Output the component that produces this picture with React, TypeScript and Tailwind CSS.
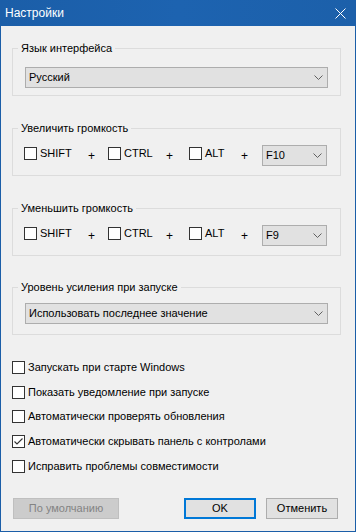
import React from "react";

function Chevron() {
  return (
    <svg width="9" height="5" viewBox="0 0 9 5" className="shrink-0">
      <polyline points="0.5,0.5 4.5,4.5 8.5,0.5" fill="none" stroke="#606060" strokeWidth="1" />
    </svg>
  );
}

function Combo({ value, className }: { value: string; className: string }) {
  return (
    <div
      className={
        "h-[21px] border border-[#adadad] bg-[#e1e1e1] flex items-center justify-between pl-[3px] pr-[4px] text-black " +
        className
      }
    >
      <span className="leading-[13px]">{value}</span>
      <Chevron />
    </div>
  );
}

function Box({ checked }: { checked?: boolean }) {
  return (
    <div className="w-[13px] h-[13px] border border-[#333333] bg-white shrink-0 flex items-center justify-center">
      {checked && (
        <svg width="11" height="11" viewBox="0 0 11 11">
          <polyline points="1.5,5.5 4,8 9.5,2.5" fill="none" stroke="#333333" strokeWidth="1.1" />
        </svg>
      )}
    </div>
  );
}

function Check({ label, checked, className }: { label: string; checked?: boolean; className?: string }) {
  return (
    <div className={"flex items-center gap-[3px] h-[13px] " + (className ?? "")}>
      <Box checked={checked} />
      <span className="leading-[13px] whitespace-nowrap">{label}</span>
    </div>
  );
}

function Group({
  title,
  children,
  pt,
  pb,
  className,
}: {
  title: string;
  children: React.ReactNode;
  pt: string;
  pb: string;
  className: string;
}) {
  return (
    <fieldset className={"border border-[#dcdcdc] m-0 p-0 " + className}>
      <legend className="ml-[5px] px-[3px] leading-[16px] text-black">{title}</legend>
      <div className={pt + " " + pb}>{children}</div>
    </fieldset>
  );
}

function Plus({ className }: { className: string }) {
  return <span className={"h-[14px] leading-[14px] text-[12px] mt-[4px] shrink-0 " + className}>+</span>;
}

function HotkeyRow({ fkey }: { fkey: string }) {
  return (
    <div className="flex items-start pl-[11px]">
      <Check label="SHIFT" className="w-[64px] mt-[2px] shrink-0" />
      <Plus className="w-[20px]" />
      <Check label="CTRL" className="w-[58px] mt-[2px] shrink-0" />
      <Plus className="w-[23px]" />
      <Check label="ALT" className="w-[52px] mt-[2px] shrink-0" />
      <Plus className="w-[21px]" />
      <Combo value={fkey} className="w-[65px]" />
    </div>
  );
}

export default function App() {
  return (
    <div
      className="w-[356px] h-[532px] bg-[#f0f0f0] flex flex-col border-x border-b border-[#1b5ea8] text-[11px] text-black"
      style={{ fontFamily: "'Liberation Sans', Arial, sans-serif" }}
    >
      <div className="h-[26px] shrink-0 bg-gradient-to-r from-[#1b5ea8] via-[#1d63b0] to-[#1c60aa] flex items-center justify-between pl-[4px] pr-[9px] text-white">
        <span className="text-[12px] leading-[16px]">Настройки</span>
        <svg width="11" height="11" viewBox="0 0 11 11">
          <path d="M0.5 0.5 L10.5 10.5 M10.5 0.5 L0.5 10.5" stroke="#ffffff" strokeWidth="1" fill="none" />
        </svg>
      </div>

      <div className="flex flex-col pl-[11px] pr-[14px]">
        <Group title="Язык интерфейса" pt="pt-[11px]" pb="pb-[7px] px-[12px]" className="mt-[14px]">
          <Combo value="Русский" className="w-full" />
        </Group>

        <Group title="Увеличить громкость" pt="pt-[9px]" pb="pb-[9px]" className="mt-[24px]">
          <HotkeyRow fkey="F10" />
        </Group>

        <Group title="Уменьшить громкость" pt="pt-[9px]" pb="pb-[9px]" className="mt-[24px]">
          <HotkeyRow fkey="F9" />
        </Group>

        <Group title="Уровень усиления при запуске" pt="pt-[8px]" pb="pb-[10px] px-[12px]" className="mt-[23px]">
          <Combo value="Использовать последнее значение" className="w-full" />
        </Group>

        <div className="flex flex-col mt-[26px]">
          <Check label="Запускать при старте Windows" />
          <Check label="Показать уведомление при запуске" className="mt-[12px]" />
          <Check label="Автоматически проверять обновления" className="mt-[11px]" />
          <Check label="Автоматически скрывать панель с контролами" checked className="mt-[12px]" />
          <Check label="Исправить проблемы совместимости" className="mt-[12px]" />
        </div>

        <div className="flex items-center mt-[25px] pl-[1px] pr-[3px]">
          <div className="w-[106px] h-[21px] border border-[#bfbfbf] bg-[#cccccc] text-[#838383] flex items-center justify-center">
            По умолчанию
          </div>
          <div className="flex-1" />
          <div className="w-[72px] h-[21px] border-2 border-[#0078d7] bg-[#e1e1e1] flex items-center justify-center">
            OK
          </div>
          <div className="w-[72px] h-[21px] ml-[10px] border border-[#adadad] bg-[#e1e1e1] flex items-center justify-center">
            Отменить
          </div>
        </div>
      </div>
    </div>
  );
}
